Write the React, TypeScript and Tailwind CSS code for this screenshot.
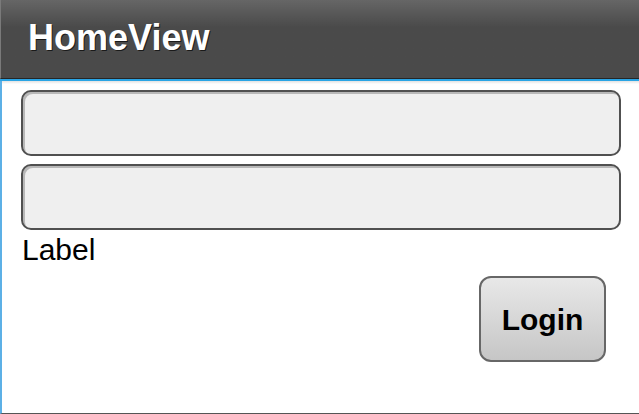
const App = () => {
	return (
		<div className="h-[414px] w-[639px] bg-white font-['Liberation_Sans',Arial,sans-serif] flex flex-col">
			<header className="h-[79px] shrink-0 bg-gradient-to-b from-[#666666] via-[#4a4a4a] via-35% to-[#4a4a4a] border-b border-[#262626] border-l border-l-[#7a7a7a] flex items-center pl-[27px] pb-[2px]">
				<h1 className="text-white text-[36px] font-bold leading-none [text-shadow:1px_1px_0_#1a1a1a]">HomeView</h1>
			</header>
			<div className="h-[2px] bg-[#2aa4e4] shrink-0" />
			<main className="flex-1 border-l-2 border-[#5cb0e6] border-b border-b-[#555555] bg-gradient-to-b from-[#e2e2e2] to-white to-[3px] pl-[19px] pr-[18px] pt-[9px] flex flex-col">
				<input
					type="text"
					className="h-[66px] w-full rounded-[10px] border-2 border-[#505050] bg-[#efefef] shadow-[inset_2px_2px_0_#b8b8b8] outline-none"
				/>
				<input
					type="text"
					className="mt-[8px] h-[66px] w-full rounded-[10px] border-2 border-[#505050] bg-[#efefef] shadow-[inset_2px_2px_0_#b8b8b8] outline-none"
				/>
				<span className="mt-[5px] pl-[1px] text-[30px] leading-[30px] text-black">Label</span>
				<div className="flex justify-end pr-[15px] mt-[11px]">
					<button className="h-[86px] w-[127px] rounded-[12px] border-2 border-[#676767] bg-gradient-to-b from-[#e8e8e8] to-[#c6c6c6] text-[30px] font-bold text-black">
						Login
					</button>
				</div>
			</main>
		</div>
	);
};

export default App;
